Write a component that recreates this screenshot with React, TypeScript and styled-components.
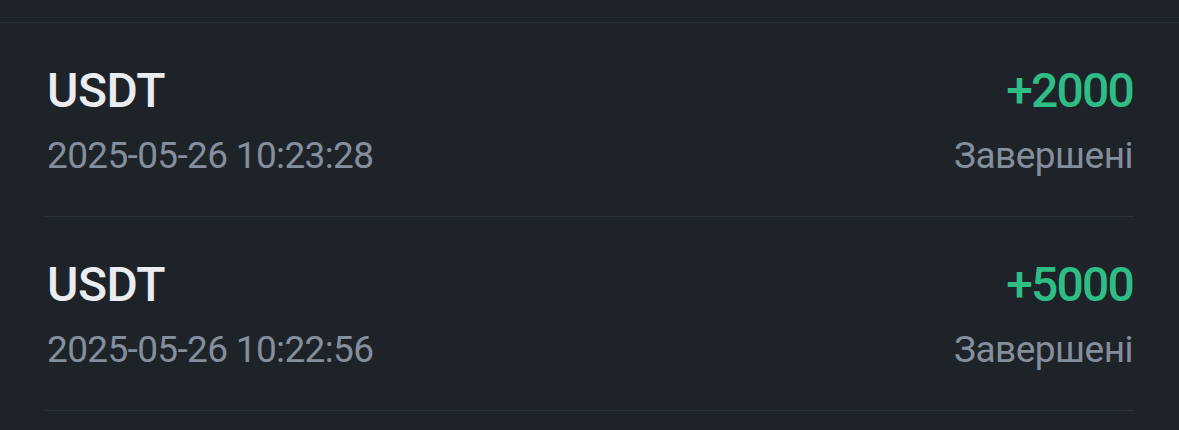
import React from "react";
import styled, { createGlobalStyle } from "styled-components";

const Global = createGlobalStyle`
  html, body { margin: 0; padding: 0; background: #1e2329; }
  body { font-family: Roboto, "Noto Sans", Arial, sans-serif; }
`;

const Page = styled.div`
  width: 1179px;
  height: 430px;
  background: #1e2329;
  overflow: hidden;
`;

const TopBar = styled.div`
  height: 22px;
  border-bottom: 1px solid #2b3139;
`;

const List = styled.div`
  padding: 0 45px;
`;

const Row = styled.div`
  display: grid;
  grid-template-columns: 1fr auto;
  grid-template-rows: 56px 48px;
  row-gap: 13px;
  padding: 40px 1px 36px 2px;
  border-bottom: 1px solid #2b3139;
`;

const Coin = styled.div`
  font-size: 48px;
  line-height: 56px;
  font-weight: 500;
  color: #eaecef;
  letter-spacing: -0.5px;
`;

const Amount = styled.div`
  font-size: 48px;
  line-height: 56px;
  font-weight: 500;
  color: #2ebd85;
  text-align: right;
  letter-spacing: -1.8px;
`;

const Sub = styled.div<{ $right?: boolean }>`
  font-size: 37px;
  line-height: 48px;
  color: #848e9c;
  letter-spacing: ${(p) => (p.$right ? "-0.5px" : "-0.65px")};
  text-align: ${(p) => (p.$right ? "right" : "left")};
`;

const items = [
  { coin: "USDT", time: "2025-05-26 10:23:28", amount: "+2000", status: "Завершені" },
  { coin: "USDT", time: "2025-05-26 10:22:56", amount: "+5000", status: "Завершені" },
];

export default function App() {
  return (
    <Page>
      <Global />
      <TopBar />
      <List>
        {items.map((it, i) => (
          <Row key={i}>
            <Coin>{it.coin}</Coin>
            <Amount>{it.amount}</Amount>
            <Sub>{it.time}</Sub>
            <Sub $right>{it.status}</Sub>
          </Row>
        ))}
      </List>
    </Page>
  );
}
